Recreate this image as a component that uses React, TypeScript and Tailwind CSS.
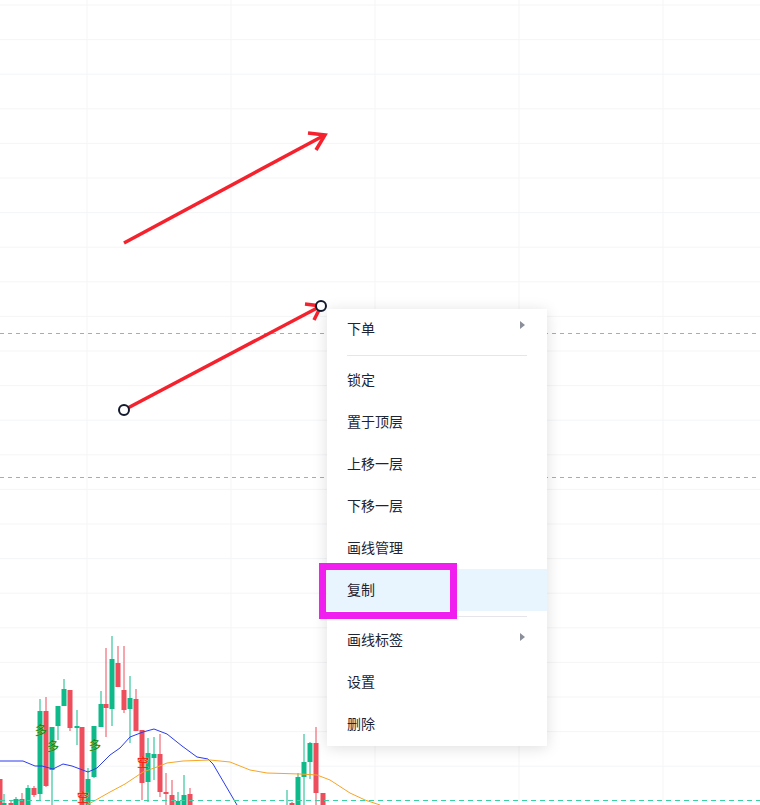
import { Fragment } from 'react'

type Candle = [number, number, number, number, number, 'g' | 'r']

const candles: Candle[] = [
  [0, 779, 805, 779, 805, 'r'],
  [4, 794, 805, 803, 805, 'g'],
  [11, 801, 805, 803, 805, 'r'],
  [16, 797, 805, 799, 805, 'g'],
  [22, 793, 805, 799, 805, 'r'],
  [28, 785, 805, 788, 805, 'g'],
  [34, 786, 797, 788, 795, 'r'],
  [40, 699, 800, 711, 794, 'g'],
  [46, 697, 787, 711, 786, 'r'],
  [52, 727, 805, 727, 770, 'g'],
  [58, 706, 740, 706, 726, 'g'],
  [64, 679, 706, 689, 706, 'g'],
  [70, 690, 731, 690, 728, 'r'],
  [77, 710, 745, 726, 728, 'g'],
  [82, 727, 805, 727, 805, 'r'],
  [88, 768, 805, 779, 805, 'g'],
  [94, 726, 778, 726, 777, 'g'],
  [101, 691, 727, 704, 727, 'g'],
  [106, 648, 737, 704, 708, 'r'],
  [112, 636, 726, 659, 709, 'g'],
  [118, 646, 687, 663, 687, 'r'],
  [124, 646, 713, 690, 710, 'r'],
  [130, 676, 743, 698, 709, 'g'],
  [136, 689, 731, 699, 731, 'r'],
  [142, 730, 800, 730, 783, 'r'],
  [148, 738, 802, 753, 782, 'g'],
  [154, 737, 780, 754, 758, 'g'],
  [160, 734, 797, 754, 792, 'r'],
  [166, 773, 805, 792, 794, 'r'],
  [172, 780, 805, 795, 805, 'r'],
  [178, 792, 805, 801, 805, 'g'],
  [184, 775, 805, 795, 805, 'g'],
  [190, 788, 805, 794, 805, 'r'],
  [287, 790, 805, 805, 805, 'g'],
  [292, 802, 805, 803, 805, 'r'],
  [298, 773, 805, 777, 805, 'g'],
  [304, 734, 805, 762, 777, 'g'],
  [310, 742, 779, 743, 762, 'g'],
  [316, 727, 805, 743, 793, 'r'],
  [323, 793, 805, 793, 805, 'r'],
]

const blueLine =
  '0,761 23,761 35,766 42,766 53,769 63,764 72,766 88,772 97,768 110,755 120,748 130,737 143,732 154,729 167,734 182,746 197,757 208,759 213,764 237,805'
const orangeLine =
  '87,805 110,792 125,784 143,772 157,767 167,763 183,761 210,760 230,762 250,770 267,773 300,774 317,775 330,780 350,793 365,800 380,805'

const GREEN = '#10b98a'
const RED = '#ee4d5c'

function ChartCanvas() {
  const rows = Array.from({ length: 24 }, (_, i) => 5 + i * 34.6)
  const cols = [87, 231, 375, 519, 663]
  return (
    <svg width="760" height="805" viewBox="0 0 760 805" className="block">
      {rows.map((y) => (
        <line key={'h' + y} x1="0" x2="760" y1={y} y2={y} stroke="#f4f5f7" strokeWidth="1" />
      ))}
      {cols.map((x) => (
        <line key={'v' + x} x1={x} x2={x} y1="0" y2="805" stroke="#f4f5f7" strokeWidth="1" />
      ))}

      <line x1="0" x2="760" y1="333.5" y2="333.5" stroke="#ee8d96" strokeWidth="1" strokeDasharray="4 4" />
      <line x1="0" x2="760" y1="477.5" y2="477.5" stroke="#ee8d96" strokeWidth="1" strokeDasharray="4 4" />

      {candles.map(([x, wt, wb, bt, bb, c], i) => {
        const col = c === 'g' ? GREEN : RED
        return (
          <Fragment key={i}>
            <line x1={x} x2={x} y1={wt} y2={wb} stroke={col} strokeWidth="1" />
            {bb > bt && <rect x={x - 2.5} y={bt} width="5" height={Math.max(bb - bt, 1)} fill={col} />}
          </Fragment>
        )
      })}

      <polyline points={blueLine} fill="none" stroke="#2b3bf0" strokeWidth="1" />
      <polyline points={orangeLine} fill="none" stroke="#f7a523" strokeWidth="1" />

      <line x1="0" x2="760" y1="800.5" y2="800.5" stroke="#3ccfa2" strokeWidth="1" strokeDasharray="5 4" />

      <g fontFamily="'Noto Sans CJK SC', sans-serif" fontSize="12" paintOrder="stroke">
        <text x="41" y="735" textAnchor="middle" fill="#078a12" stroke="#d9a21b" strokeWidth="0.35">多</text>
        <text x="53" y="751" textAnchor="middle" fill="#078a12" stroke="#d9a21b" strokeWidth="0.35">多</text>
        <text x="95" y="750" textAnchor="middle" fill="#078a12" stroke="#d9a21b" strokeWidth="0.35">多</text>
        <text x="83" y="802" textAnchor="middle" fill="#ff0a0a" stroke="#f5a623" strokeWidth="0.35">空</text>
        <text x="143" y="767" textAnchor="middle" fill="#ff0a0a" stroke="#f5a623" strokeWidth="0.35">空</text>
      </g>

      <g stroke="#f5222d" strokeWidth="3.5" fill="none" strokeLinecap="butt" strokeLinejoin="miter">
        <line x1="124" y1="243" x2="323" y2="136" />
        <polyline points="308,133 325,135 316,150" />
        <line x1="124" y1="410" x2="321" y2="306" />
        <polyline points="305,304 321,306 314,320" />
      </g>
      <circle cx="124" cy="410" r="5" fill="#fff" stroke="#141a2e" strokeWidth="2" />
      <circle cx="321" cy="306" r="5" fill="#fff" stroke="#141a2e" strokeWidth="2" />
    </svg>
  )
}

function Caret() {
  return <span className="block w-0 h-0 border-y-[4px] border-y-transparent border-l-[5px] border-l-[#8a8f99]" />
}

type Item = { label: string; sub?: boolean; active?: boolean }

function MenuRow({ label, sub, active }: Item) {
  return (
    <div
      className={
        'h-[42px] flex items-center justify-between pl-5 pr-[22px] text-[14px] text-[#1d2433] ' +
        (active ? 'bg-[#e8f4fe]' : '')
      }
    >
      <span className="-mt-px">{label}</span>
      {sub && (
        <span className="-mt-[6px]">
          <Caret />
        </span>
      )}
    </div>
  )
}

export default function App() {
  const middle: Item[] = [
    { label: '锁定' },
    { label: '置于顶层' },
    { label: '上移一层' },
    { label: '下移一层' },
    { label: '画线管理' },
    { label: '复制', active: true },
  ]
  const bottom: Item[] = [{ label: '画线标签', sub: true }, { label: '设置' }, { label: '删除' }]

  return (
    <div
      className="relative w-[760px] h-[805px] overflow-hidden bg-white"
      style={{ fontFamily: "'Noto Sans CJK SC', 'Noto Sans', sans-serif" }}
    >
      <ChartCanvas />

      <div className="absolute left-[327px] top-[309px] w-[220px] bg-white shadow-[0_2px_14px_rgba(0,0,0,0.13)]">
        <div className="h-[38px] flex items-center justify-between pl-5 pr-[22px] text-[14px] text-[#1d2433]">
          <span>下单</span>
          <span className="-mt-[6px]">
            <Caret />
          </span>
        </div>
        <div className="mx-5 mt-[8px] mb-[3px] h-px bg-[#e5e6ea]" />
        {middle.map((it) => (
          <MenuRow key={it.label} {...it} />
        ))}
        <div className="mx-5 mt-[5px] mb-[2px] h-px bg-[#e5e6ea]" />
        {bottom.map((it) => (
          <MenuRow key={it.label} {...it} />
        ))}
        <div className="h-px" />
      </div>

      <div className="absolute left-[319px] top-[563px] w-[138px] h-[56px] border-[7px] border-[#f01ff0]" />
    </div>
  )
}
